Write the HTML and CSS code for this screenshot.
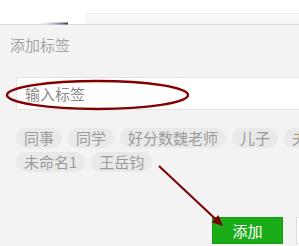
FILE: index.html
```html
<!DOCTYPE html>
<html lang="zh-CN">
<head>
  <meta charset="UTF-8">
  <meta name="viewport" content="width=device-width, initial-scale=1.0">
  <title>添加标签</title>
  <link rel="stylesheet" href="styles.css">
</head>
<body>
  <div class="topbar">
    <div class="topbar-left"></div>
    <div class="topbar-band"></div>
  </div>

  <div class="dialog">
    <div class="dialog-title">添加标签</div>

    <div class="tag-input">输入标签</div>

    <div class="tags">
      <span class="tag">同事</span>
      <span class="tag">同学</span>
      <span class="tag">好分数魏老师</span>
      <span class="tag">儿子</span>
      <span class="tag">夫人</span>
      <span class="tag">未命名1</span>
      <span class="tag">王岳钧</span>
    </div>

    <div class="actions">
      <button class="btn btn-add">添加</button>
      <button class="btn btn-cancel">取消</button>
    </div>
  </div>

  <!-- hand-drawn annotation on top of the dialog -->
  <svg class="marks" width="299" height="246" viewBox="0 0 299 246">
    <defs>
      <linearGradient id="tabMark" x1="0" x2="1" y1="0" y2="0">
        <stop offset="0" stop-color="#d8d4dc" stop-opacity="0"/>
        <stop offset="1" stop-color="#3e2c52"/>
      </linearGradient>
    </defs>
    <rect x="37" y="22.5" width="31" height="2" fill="url(#tabMark)"/>
    <ellipse cx="97.5" cy="95" rx="90.5" ry="14" fill="none" stroke="#820000" stroke-width="2.4"/>
    <line x1="159" y1="166" x2="216" y2="219.5" stroke="#7a0000" stroke-width="2"/>
    <polygon points="223,226 211.6,222.2 218.4,214.9" fill="#7a0000"/>
  </svg>
</body>
</html>
```

FILE: styles.css
```css
html, body {
  margin: 0;
  padding: 0;
  overflow: hidden;
}

body {
  position: relative;
  width: 299px;
  height: 246px;
  background-color: #f3f3f3;
  font-family: "Noto Sans CJK SC", "Noto Sans", sans-serif;
}

.topbar {
  display: flex;
  height: 24px;
  background-color: #fff;
  border-bottom: 1px solid #dcdcdc;
}

.topbar-left {
  width: 85px;
}

.topbar-band {
  flex: 1;
  margin-top: 13px;
  border-top: 1px solid #ececec;
  background: linear-gradient(#fcfcfc, #f4f4f4);
}

.dialog {
  padding-left: 10px;
}

.dialog-title {
  margin-top: 10px;
  font-size: 15px;
  line-height: 20px;
  color: #a3a3a3;
}

.tag-input {
  margin-top: 22px;
  margin-left: 6px;
  width: 320px;
  height: 31px;
  padding-left: 8px;
  background-color: #fff;
  border: 1px solid #e4e4e4;
  font-size: 15px;
  line-height: 31px;
  color: #8a8a8a;
}

.tags {
  display: flex;
  flex-wrap: wrap;
  gap: 4px 6px;
  width: 340px;
  margin-top: 18px;
  margin-left: 6px;
}

.tag {
  padding: 0 8px;
  height: 20px;
  line-height: 20px;
  font-size: 15px;
  color: #9a9a9a;
  background-color: #e9e9e9;
  border-radius: 10px;
  white-space: nowrap;
}

.actions {
  display: flex;
  gap: 13px;
  margin-top: 45px;
  padding-left: 202px;
}

.btn {
  flex-shrink: 0;
  width: 71px;
  height: 27px;
  padding: 0;
  font-family: inherit;
  font-size: 15px;
  border-radius: 0;
}

.btn-add {
  color: #fff;
  background-color: #1aad19;
  border: 1px solid #179b16;
}

.btn-cancel {
  color: #333;
  background-color: #fff;
  border: 1px solid #dcdcdc;
}

.marks {
  position: absolute;
  top: 0;
  left: 0;
}
```
